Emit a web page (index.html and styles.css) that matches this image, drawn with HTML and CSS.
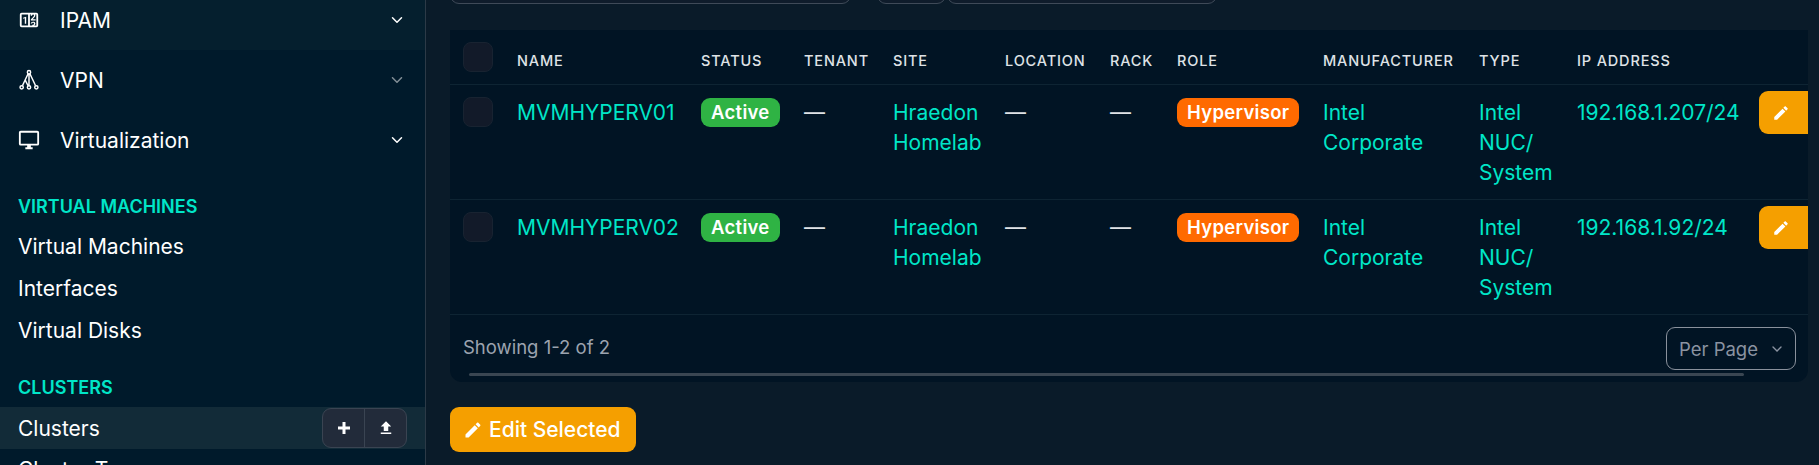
FILE: index.html
```html
<!DOCTYPE html>
<html lang="en">
<head>
  <meta charset="UTF-8" />
  <title>Virtual Machines</title>
  <link rel="stylesheet" href="styles.css">
</head>
<body>
  <aside class="sidebar">
    <a class="nav-top nav-open">
      <svg class="nav-icon" viewBox="0 0 24 24"><path d="M4,4H20A2,2 0 0,1 22,6V18A2,2 0 0,1 20,20H4A2,2 0 0,1 2,18V6A2,2 0 0,1 4,4M4,6V18H11V6H4M20,18V6H18.76C19,6.54 18.95,7.07 18.95,7.13C18.88,7.8 18.41,8.5 18.24,8.75L15.91,11.3L19.23,11.28L19.24,12.5L14.04,12.47L14,11.47C14,11.47 17.05,8.24 17.2,7.95C17.34,7.67 17.91,6 16.5,6C15.27,6.05 15.41,7.3 15.41,7.3L13.87,7.31C13.87,7.31 13.88,6.65 14.25,6H13V18H15.58L15.57,17.14L16.54,17.13C16.54,17.13 17.45,16.97 17.46,16.08C17.5,15.08 16.65,15.08 16.5,15.08C16.37,15.08 15.43,15.13 15.43,15.95H13.91C13.91,15.95 13.95,13.89 16.5,13.89C19.1,13.89 18.96,15.91 18.96,15.91C18.96,15.91 19,17.16 17.85,17.63L18.37,18H20M8.92,16H7.42V10.2L5.62,10.76V9.53L8.76,8.41H8.92V16Z"/></svg>
      <span class="nav-label">IPAM</span>
      <svg class="chevron" viewBox="0 0 24 24"><path d="M6 9l6 6 6-6"/></svg>
    </a>
    <a class="nav-top">
      <svg class="nav-icon nav-icon-line" viewBox="0 0 24 24">
        <circle cx="12" cy="3.500" r="1.800"/><circle cx="4" cy="20" r="1.800"/><circle cx="12" cy="20" r="1.800"/><circle cx="20" cy="20" r="1.800"/>
        <path d="M11 5.200L4.800 18.300M13 5.200L19.200 18.300M12 5.300v12.900M8 12.500l3 5.800"/>
      </svg>
      <span class="nav-label">VPN</span>
      <svg class="chevron chevron-dim" viewBox="0 0 24 24"><path d="M6 9l6 6 6-6"/></svg>
    </a>
    <a class="nav-top">
      <svg class="nav-icon" viewBox="0 0 24 24"><path d="M21,16H3V4H21M21,2H3C1.89,2 1,2.89 1,4V16A2,2 0 0,0 3,18H10V20H8V22H16V20H14V18H21A2,2 0 0,0 23,16V4C23,2.89 22.1,2 21,2Z"/></svg>
      <span class="nav-label">Virtualization</span>
      <svg class="chevron" viewBox="0 0 24 24"><path d="M6 9l6 6 6-6"/></svg>
    </a>

    <div class="nav-heading">VIRTUAL MACHINES</div>
    <a class="nav-link">Virtual Machines</a>
    <a class="nav-link">Interfaces</a>
    <a class="nav-link">Virtual Disks</a>

    <div class="nav-heading">CLUSTERS</div>
    <a class="nav-link nav-link-hover">
      <span class="nav-text">Clusters</span>
      <span class="nav-btns">
        <span class="nav-btn"><svg viewBox="0 0 24 24"><path d="M20 14H14V20H10V14H4V10H10V4H14V10H20V14Z"/></svg></span>
        <span class="nav-btn"><svg viewBox="0 0 24 24"><path d="M9,16V10H5L12,3L19,10H15V16H9M5,20V18H19V20H5Z"/></svg></span>
      </span>
    </a>
    <a class="nav-link">Cluster Types</a>
  </aside>

  <main class="content">
    <div class="filters">
      <div class="filter filter-search"></div>
      <div class="filter filter-small"></div>
      <div class="filter filter-columns"></div>
    </div>

    <section class="card">
      <div class="table-wrap">
        <table class="vm-table">
          <colgroup>
            <col class="c-check"><col class="c-name"><col class="c-status"><col class="c-tenant"><col class="c-site"><col class="c-location"><col class="c-rack"><col class="c-role"><col class="c-maker"><col class="c-type"><col class="c-ip"><col class="c-edit">
          </colgroup>
          <thead>
            <tr>
              <th><span class="check"></span></th>
              <th>NAME</th><th>STATUS</th><th>TENANT</th><th>SITE</th><th>LOCATION</th><th>RACK</th><th>ROLE</th><th>MANUFACTURER</th><th>TYPE</th><th>IP ADDRESS</th><th></th>
            </tr>
          </thead>
          <tbody>
            <tr>
              <td><span class="check"></span></td>
              <td><a>MVMHYPERV01</a></td>
              <td><span class="badge badge-green">Active</span></td>
              <td class="none">—</td>
              <td><a>Hraedon Homelab</a></td>
              <td class="none">—</td>
              <td class="none">—</td>
              <td><span class="badge badge-orange">Hypervisor</span></td>
              <td><a>Intel Corporate</a></td>
              <td><a>Intel NUC/ System</a></td>
              <td><a>192.168.1.207/24</a></td>
              <td class="edit-cell"><span class="edit-btn"><svg viewBox="0 0 24 24"><path d="M20.71,7.04C21.1,6.65 21.1,6 20.71,5.63L18.37,3.29C18,2.9 17.35,2.9 16.96,3.29L15.12,5.12L18.87,8.87M3,17.25V21H6.75L17.81,9.93L14.06,6.18L3,17.25Z"/></svg></span></td>
            </tr>
            <tr>
              <td><span class="check"></span></td>
              <td><a>MVMHYPERV02</a></td>
              <td><span class="badge badge-green">Active</span></td>
              <td class="none">—</td>
              <td><a>Hraedon Homelab</a></td>
              <td class="none">—</td>
              <td class="none">—</td>
              <td><span class="badge badge-orange">Hypervisor</span></td>
              <td><a>Intel Corporate</a></td>
              <td><a>Intel NUC/ System</a></td>
              <td><a>192.168.1.92/24</a></td>
              <td class="edit-cell"><span class="edit-btn"><svg viewBox="0 0 24 24"><path d="M20.71,7.04C21.1,6.65 21.1,6 20.71,5.63L18.37,3.29C18,2.9 17.35,2.9 16.96,3.29L15.12,5.12L18.87,8.87M3,17.25V21H6.75L17.81,9.93L14.06,6.18L3,17.25Z"/></svg></span></td>
            </tr>
          </tbody>
        </table>
      </div>
      <div class="card-footer">
        <span class="showing">Showing 1-2 of 2</span>
        <div class="per-page">
          Per Page
          <svg viewBox="0 0 24 24"><path d="M6 9l6 6 6-6"/></svg>
        </div>
      </div>
      <div class="scroll-thumb"></div>
    </section>

    <button class="edit-selected">
      <svg viewBox="0 0 24 24"><path d="M20.71,7.04C21.1,6.65 21.1,6 20.71,5.63L18.37,3.29C18,2.9 17.35,2.9 16.96,3.29L15.12,5.12L18.87,8.87M3,17.25V21H6.75L17.81,9.93L14.06,6.18L3,17.25Z"/></svg>
      Edit Selected
    </button>
  </main>
</body>
</html>
```

FILE: styles.css
```css
html, body {
  height: 100%;
}
body {
  margin: 0;
  display: flex;
  overflow: hidden;
  background-color: #0a1b29;
  color: #ffffff;
  font-family: "Inter", "Liberation Sans", sans-serif;
  font-size: 21px;
}

/* sidebar */
.sidebar {
  width: 425px;
  flex-shrink: 0;
  margin-top: -10px;
  height: 475px;
  overflow: hidden;
  background-color: #001a2b;
  border-right: 1px solid #2c3a47;
}
.nav-top {
  display: flex;
  align-items: center;
  height: 60px;
  padding: 0 18px;
  font-size: 21px;
}
.nav-open {
  background-color: #051f2e;
}
.nav-icon {
  width: 22px;
  height: 22px;
  margin-right: 20px;
  fill: #ffffff;
  flex-shrink: 0;
}
.nav-icon-line {
  fill: none;
  stroke: #ffffff;
  stroke-width: 1.6;
}
.nav-label {
  flex: 1;
}
.chevron {
  width: 18px;
  height: 18px;
  margin-right: 1px;
  fill: none;
  stroke: #ffffff;
  stroke-width: 2;
  stroke-linecap: round;
  stroke-linejoin: round;
}
.chevron-dim {
  opacity: .5;
}
.nav-heading {
  padding: 27px 18px 9px;
  line-height: 20px;
  font-size: 18px;
  font-weight: 600;
  color: #00e6c8;
}
.nav-link {
  display: flex;
  align-items: center;
  justify-content: space-between;
  box-sizing: content-box;
  height: 41.67px;
  padding: 0 18px;
  font-size: 21px;
}
.nav-link-hover {
  background-color: #122b38;
}
.nav-text {
  padding-top: 1px;
}
.nav-btns {
  display: flex;
  height: 40px;
  box-sizing: border-box;
  border: 1px solid #3a4452;
  border-radius: 9px;
  background-color: #222b3a;
  overflow: hidden;
}
.nav-btn {
  display: flex;
  align-items: center;
  justify-content: center;
  width: 41px;
}
.nav-btn + .nav-btn {
  border-left: 1px solid #3a4452;
}
.nav-btn svg {
  width: 18px;
  height: 18px;
  fill: #ffffff;
}

/* main column */
.content {
  flex: 1;
  min-width: 0;
  padding: 0 11px 0 24px;
}
.filters {
  display: flex;
  height: 44px;
  margin-top: -40px;
}
.filter {
  box-sizing: border-box;
  height: 44px;
  border: 1px solid #3f4a58;
  border-radius: 9px;
  background-color: #0f1c2b;
}
.filter-search {
  width: 401px;
  margin-right: 26px;
}
.filter-small {
  width: 69px;
  margin-right: 1px;
}
.filter-columns {
  width: 270px;
}

.card {
  position: relative;
  margin-top: 26px;
  height: 352px;
  border-radius: 0 0 12px 12px;
  background-color: #011424;
  overflow: hidden;
}
.table-wrap {
  overflow: hidden;
}
.vm-table {
  width: 1395px;
  table-layout: fixed;
  border-collapse: separate;
  border-spacing: 0;
}
.c-check { width: 53px; }
.c-name { width: 184px; }
.c-status { width: 103px; }
.c-tenant { width: 89px; }
.c-site { width: 112px; }
.c-location { width: 105px; }
.c-rack { width: 67px; }
.c-role { width: 146px; }
.c-maker { width: 156px; }
.c-type { width: 98px; }
.c-ip { width: 182px; }
.c-edit { width: 100px; }

.vm-table th {
  height: 55px;
  padding: 6px 14px 0;
  border-bottom: 1px solid #0e2433;
  box-sizing: border-box;
  text-align: left;
  font-size: 14.5px;
  font-weight: 500;
  letter-spacing: .85px;
  color: #dfe2e6;
}
.vm-table td {
  height: 115px;
  padding: 13px 14px 11px;
  box-sizing: border-box;
  border-bottom: 1px solid #0e2433;
  vertical-align: top;
  line-height: 30px;
}
.vm-table a {
  color: #00e6c8;
}
.vm-table th:first-child,
.vm-table td:first-child {
  padding-left: 13px;
  padding-right: 0;
}
.vm-table th:first-child {
  padding-top: 0;
}
.vm-table td:first-child {
  padding-top: 12px;
}
.check {
  display: block;
  box-sizing: border-box;
  width: 30px;
  height: 30px;
  border: 1px solid #182331;
  border-radius: 8px;
  background-color: #121a29;
}
.none {
  color: #dfe2e6;
}
.badge {
  display: inline-block;
  padding: 0 10px;
  height: 29px;
  line-height: 29px;
  border-radius: 9px;
  font-size: 18.5px;
  font-weight: 600;
  letter-spacing: .3px;
  vertical-align: top;
  color: #ffffff;
}
.badge-green {
  background-color: #2fb344;
}
.badge-orange {
  background-color: #ff6a00;
}
.vm-table .edit-cell {
  padding-top: 6px;
}
.edit-btn {
  display: flex;
  align-items: center;
  justify-content: center;
  width: 60px;
  height: 43px;
  border-radius: 9px;
  background-color: #f59f00;
}
.edit-btn svg {
  width: 18px;
  height: 18px;
  fill: #ffffff;
  margin-right: 17px;
}

.card-footer {
  display: flex;
  align-items: flex-start;
  justify-content: space-between;
  padding: 12px 12px 0 13px;
}
.showing {
  margin-top: 7px;
  line-height: 26px;
  font-size: 18.5px;
  color: #9ca3af;
}
.per-page {
  display: flex;
  align-items: center;
  justify-content: space-between;
  box-sizing: border-box;
  width: 130px;
  height: 43px;
  padding: 0 10px 0 12px;
  border: 1px solid #8a919c;
  border-radius: 9px;
  font-size: 18.5px;
  color: #8b93a1;
}
.per-page svg {
  width: 16px;
  height: 16px;
  fill: none;
  stroke: #8b93a1;
  stroke-width: 2;
  stroke-linecap: round;
}
.scroll-thumb {
  position: absolute;
  left: 19px;
  bottom: 6px;
  width: 1275px;
  height: 3px;
  border-radius: 2px;
  background-color: #3a4652;
}

.edit-selected {
  display: flex;
  align-items: center;
  gap: 6px;
  box-sizing: border-box;
  width: 186px;
  height: 45px;
  margin-top: 25px;
  padding: 0 13px;
  border: none;
  border-radius: 9px;
  background-color: #f59f00;
  color: #ffffff;
  font-family: inherit;
  font-size: 21px;
  font-weight: 500;
}
.edit-selected svg {
  width: 20px;
  height: 20px;
  fill: #ffffff;
}
```
